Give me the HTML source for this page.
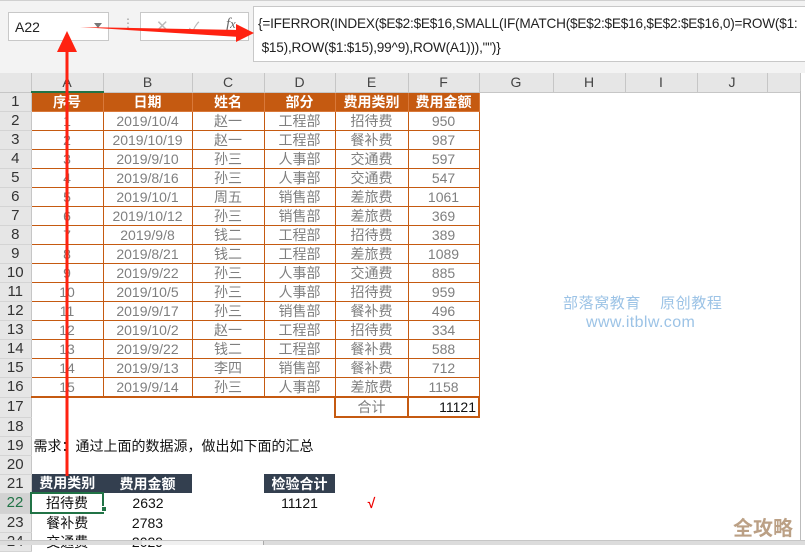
<!DOCTYPE html>
<html><head><meta charset="utf-8">
<style>
*{margin:0;padding:0;box-sizing:border-box}
body{width:805px;height:545px;overflow:hidden;background:#fff;position:relative;font-family:"Liberation Sans","Noto Sans CJK SC",sans-serif}
.top{position:absolute;left:0;top:0;width:805px;height:73px;background:#f3f3f3;border-top:1px solid #d0d0d0}
.box{position:absolute;background:#fff;border:1px solid #c8c8c8}
table{position:absolute;left:0;top:73px;border-collapse:collapse;table-layout:fixed}
td{height:19px;padding:0;font-size:14px;text-align:center;white-space:nowrap;overflow:hidden;color:#7f7f7f;line-height:18px}
tr.ch td{height:18px;background:#e6e6e6;color:#444;border-right:1px solid #c6c6c6;border-bottom:1px solid #c6c6c6;font-size:14px}
td.rh{background:#e6e6e6;color:#333;border-right:1px solid #c6c6c6;border-bottom:1px solid #d4d4d4;font-size:15px}
td.o{border:1px solid #c55a11}
tr.h td.o{background:#c55a11;color:#fff;font-weight:bold;border-color:#d9793a}
td.d{background:#333f4f;color:#fff;font-weight:bold}
td.k{color:#111}
</style></head><body>
<div class="top"></div>
<div class="box" style="left:8px;top:12px;width:101px;height:29px;font-size:14px;padding:6px 0 0 6px;color:#222">A22<span style="position:absolute;right:6px;top:10px;border:4px solid transparent;border-top:5px solid #777"></span></div>
<div style="position:absolute;left:122px;top:16px;color:#999;font-size:12px">⋮</div>
<div class="box" style="left:140px;top:12px;width:109px;height:29px;color:#bbb;font-size:15px"><span style="position:absolute;left:15px;top:4px">✕</span><span style="position:absolute;left:48px;top:4px">✓</span><span style="position:absolute;left:85px;top:3px;color:#666;font-style:italic;font-family:'Liberation Serif',serif">f<small>x</small></span></div>
<div class="box" style="left:253px;top:6px;width:560px;height:56px;font-size:13.6px;letter-spacing:-0.2px;color:#222;padding:5px 0 0 4px;line-height:24px;white-space:nowrap">{=IFERROR(INDEX($E$2:$E$16,SMALL(IF(MATCH($E$2:$E$16,$E$2:$E$16,0)=ROW($1:<br>&nbsp;$15),ROW($1:$15),99^9),ROW(A1))),"")}</div>
<table>
<colgroup><col style="width:31px"><col style="width:72px"><col style="width:89px"><col style="width:72px"><col style="width:71px"><col style="width:73px"><col style="width:71px"><col style="width:74px"><col style="width:72px"><col style="width:72px"><col style="width:70px"><col style="width:33px"></colgroup>
<tr class="ch"><td style="background:#e6e6e6"></td><td style="border-bottom:2px solid #217346">A</td><td>B</td><td>C</td><td>D</td><td>E</td><td>F</td><td>G</td><td>H</td><td>I</td><td>J</td><td></td></tr>
<tr class="h"><td class="rh">1</td><td class="o">序号</td><td class="o">日期</td><td class="o">姓名</td><td class="o">部分</td><td class="o">费用类别</td><td class="o">费用金额</td><td></td><td></td><td></td><td></td><td></td></tr>
<tr><td class="rh">2</td><td class="o">1</td><td class="o">2019/10/4</td><td class="o">赵一</td><td class="o">工程部</td><td class="o">招待费</td><td class="o">950</td><td colspan="5"></td></tr>
<tr><td class="rh">3</td><td class="o">2</td><td class="o">2019/10/19</td><td class="o">赵一</td><td class="o">工程部</td><td class="o">餐补费</td><td class="o">987</td><td colspan="5"></td></tr>
<tr><td class="rh">4</td><td class="o">3</td><td class="o">2019/9/10</td><td class="o">孙三</td><td class="o">人事部</td><td class="o">交通费</td><td class="o">597</td><td colspan="5"></td></tr>
<tr><td class="rh">5</td><td class="o">4</td><td class="o">2019/8/16</td><td class="o">孙三</td><td class="o">人事部</td><td class="o">交通费</td><td class="o">547</td><td colspan="5"></td></tr>
<tr><td class="rh">6</td><td class="o">5</td><td class="o">2019/10/1</td><td class="o">周五</td><td class="o">销售部</td><td class="o">差旅费</td><td class="o">1061</td><td colspan="5"></td></tr>
<tr><td class="rh">7</td><td class="o">6</td><td class="o">2019/10/12</td><td class="o">孙三</td><td class="o">销售部</td><td class="o">差旅费</td><td class="o">369</td><td colspan="5"></td></tr>
<tr><td class="rh">8</td><td class="o">7</td><td class="o">2019/9/8</td><td class="o">钱二</td><td class="o">工程部</td><td class="o">招待费</td><td class="o">389</td><td colspan="5"></td></tr>
<tr><td class="rh">9</td><td class="o">8</td><td class="o">2019/8/21</td><td class="o">钱二</td><td class="o">工程部</td><td class="o">差旅费</td><td class="o">1089</td><td colspan="5"></td></tr>
<tr><td class="rh">10</td><td class="o">9</td><td class="o">2019/9/22</td><td class="o">孙三</td><td class="o">人事部</td><td class="o">交通费</td><td class="o">885</td><td colspan="5"></td></tr>
<tr><td class="rh">11</td><td class="o">10</td><td class="o">2019/10/5</td><td class="o">孙三</td><td class="o">人事部</td><td class="o">招待费</td><td class="o">959</td><td colspan="5"></td></tr>
<tr><td class="rh">12</td><td class="o">11</td><td class="o">2019/9/17</td><td class="o">孙三</td><td class="o">销售部</td><td class="o">餐补费</td><td class="o">496</td><td colspan="5"></td></tr>
<tr><td class="rh">13</td><td class="o">12</td><td class="o">2019/10/2</td><td class="o">赵一</td><td class="o">工程部</td><td class="o">招待费</td><td class="o">334</td><td colspan="5"></td></tr>
<tr><td class="rh">14</td><td class="o">13</td><td class="o">2019/9/22</td><td class="o">钱二</td><td class="o">工程部</td><td class="o">餐补费</td><td class="o">588</td><td colspan="5"></td></tr>
<tr><td class="rh">15</td><td class="o">14</td><td class="o">2019/9/13</td><td class="o">李四</td><td class="o">销售部</td><td class="o">餐补费</td><td class="o">712</td><td colspan="5"></td></tr>
<tr><td class="rh">16</td><td class="o" style="border-bottom-width:2px">15</td><td class="o" style="border-bottom-width:2px">2019/9/14</td><td class="o" style="border-bottom-width:2px">孙三</td><td class="o" style="border-bottom-width:2px">人事部</td><td class="o" style="border-bottom-width:2px">差旅费</td><td class="o" style="border-bottom-width:2px">1158</td><td colspan="5"></td></tr>
<tr><td class="rh">17</td><td></td><td></td><td></td><td></td><td class="o" style="border-width:2px">合计</td><td class="o k" style="border-width:2px;text-align:right;padding-right:2px">11121</td><td colspan="5"></td></tr>
<tr><td class="rh">18</td><td colspan="11"></td></tr>
<tr><td class="rh">19</td><td colspan="11" class="k" style="text-align:left;padding-left:2px;font-size:14px">需求：通过上面的数据源，做出如下面的汇总</td></tr>
<tr><td class="rh">20</td><td colspan="11"></td></tr>
<tr><td class="rh">21</td><td class="d">费用类别</td><td class="d">费用金额</td><td></td><td class="d">检验合计</td><td colspan="7"></td></tr>
<tr><td class="rh" style="background:#d2d2d2;color:#217346">22</td><td class="k" style="border:2px solid #217346">招待费</td><td class="k">2632</td><td></td><td class="k">11121</td><td style="color:#e00;font-weight:bold">√</td><td colspan="6"></td></tr>
<tr><td class="rh">23</td><td class="k">餐补费</td><td class="k">2783</td><td colspan="9"></td></tr>
<tr><td class="rh">24</td><td class="k">交通费</td><td class="k">2029</td><td colspan="9"></td></tr>
</table>
<div style="position:absolute;left:101px;top:506px;width:6px;height:6px;background:#217346;border:1px solid #fff"></div>
<div style="position:absolute;left:800px;top:91px;width:1px;height:454px;background:#bbb"></div>
<div style="position:absolute;left:0;top:540px;width:805px;height:5px;background:#f0f0f0;border-top:1px solid #c6c6c6"></div>
<div style="position:absolute;left:0;top:541px;width:142px;height:4px;background:#dcdcdc"></div>
<div style="position:absolute;left:263px;top:541px;width:542px;height:4px;background:#dcdcdc;border-left:1px solid #aaa"></div>
<div style="position:absolute;left:563px;top:292px;color:#9cc3e6;font-size:15px;letter-spacing:0.6px">部落窝教育&nbsp;&nbsp;&nbsp;&nbsp;原创教程</div>
<div style="position:absolute;left:586px;top:314px;color:#9cc3e6;font-size:16px;letter-spacing:0.4px">www.itblw.com</div>
<div style="position:absolute;left:733px;top:512px;color:#b09070;font-size:20px;font-weight:bold;opacity:.85">全攻略</div>
<svg style="position:absolute;left:0;top:0" width="805" height="545">
<line x1="67" y1="476" x2="67" y2="52" stroke="#f21" stroke-width="3"/>
<polygon points="57,52 67,31 77,52" fill="#f21"/>
<polygon points="80,27 240,30 240,37" fill="#f21"/>
<polygon points="236,24 254,33 236,42" fill="#f21"/>
</svg>
</body></html>
